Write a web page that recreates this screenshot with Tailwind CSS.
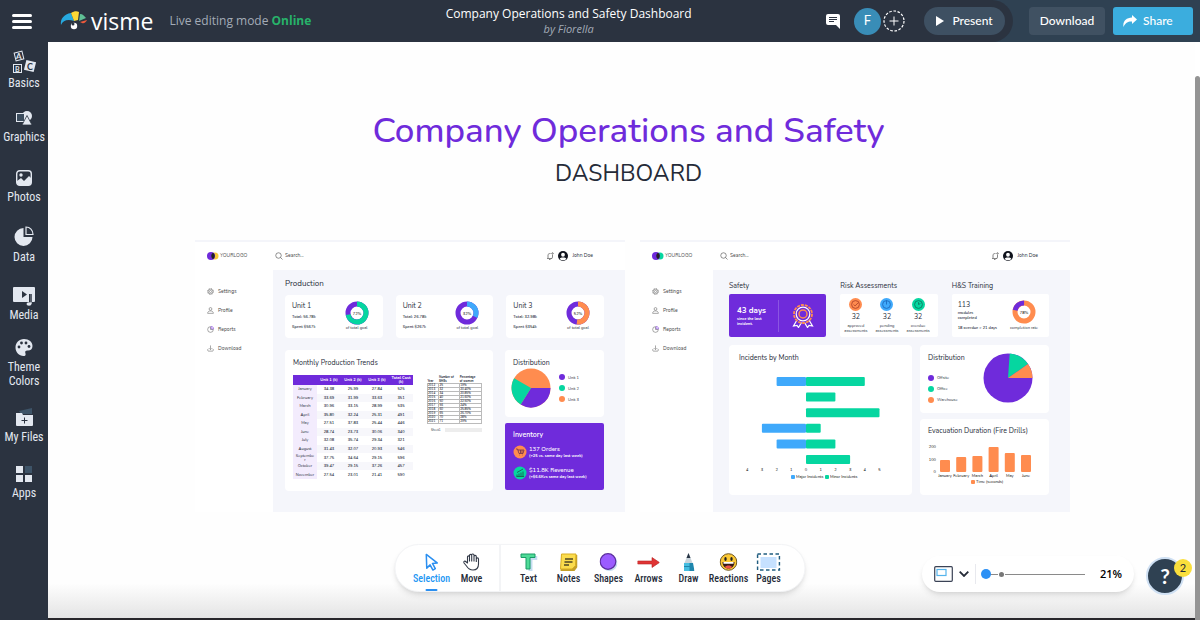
<!DOCTYPE html>
<html lang="en">
<head>
    <meta charset="UTF-8">
    <meta name="viewport" content="width=device-width, initial-scale=1.0">
    <title>Company Operations and Safety Dashboard</title>
    <script src="https://cdn.jsdelivr.net/npm/@tailwindcss/browser@4"></script>
</head>
<body class="relative h-screen flex flex-col overflow-hidden bg-white font-['Lato',sans-serif] text-[#252b38]">

    <!-- Shared icons -->
    <svg class="hidden">
        <symbol id="gear" viewBox="0 0 16 16"><g fill="none" stroke="#666" stroke-width="1.3"><circle cx="8" cy="8" r="5.5"/><circle cx="8" cy="8" r="2.5"/><circle cx="8" cy="8" r="7" stroke-dasharray="2.7 2.8"/></g></symbol>
        <symbol id="user" viewBox="0 0 16 16"><g fill="none" stroke="#666" stroke-width="1.3"><circle cx="8" cy="4.500" r="3.2"/><path d="M1.500 14.500c0-4 3-5.500 6.500-5.500s6.500 1.500 6.500 5.500z"/></g></symbol>
        <symbol id="report" viewBox="0 0 16 16"><g fill="none" stroke-width="1.3"><path stroke="#666" d="M8 1.500a6.500 6.500 0 1 0 6.500 6.500H8z"/><path stroke="#7a35dc" d="M9.500 1v5.500H15C15 3 13 1 9.500 1z"/></g></symbol>
        <symbol id="download" viewBox="0 0 16 16"><path fill="none" stroke="#666" stroke-width="1.3" d="M8 1v9M5 7.500l3 3 3-3M3 8.500c-2 1-2 5.500.500 5.500h9c2.500 0 2.500-4.500.500-5.500"/></symbol>
        <symbol id="search" viewBox="0 0 16 16"><g fill="none" stroke="#555" stroke-width="1.300"><circle cx="7" cy="7" r="5.500"/><path d="M11 11l4 4"/></g></symbol>
        <symbol id="bell" viewBox="0 0 16 16"><g fill="none" stroke="#444" stroke-width="1.300"><path d="M2 13h10l1-3V6M4 12V6c0-2 2-3 5-3"/><circle cx="13" cy="3" r="1.500"/><path d="M6 15h3"/></g></symbol>
        <symbol id="avatar" viewBox="0 0 20 20"><circle cx="10" cy="10" r="10" fill="#10131c"/><circle cx="10" cy="7.500" r="3.800" fill="#fff"/><path fill="#fff" d="M3.500 15.500c1-3.500 12-3.500 13 0-3 4-10 4-13 0z"/></symbol>
    </svg>

    <header class="flex h-[42px] shrink-0 bg-[#2f4152] text-white">
        <div class="flex flex-1 items-center rounded-r-full bg-[#2b3340] pl-3">
            <button aria-label="Menu" class="flex w-5 flex-col gap-[3px]">
                <span class="h-[3px] rounded-full bg-white"></span>
                <span class="h-[3px] rounded-full bg-white"></span>
                <span class="h-[3px] rounded-full bg-white"></span>
            </button>
            <a href="#" class="ml-7 flex items-center gap-1 font-['Open_Sans',sans-serif] text-[23px] leading-6">
                <svg class="h-5 w-[27px]" viewBox="0 0 27 20">
                    <path fill="#27a9e0" d="M1 14C0 8 4 3 11 2l3 8C8 8 3 9 1 14z"/>
                    <path fill="#fbd936" d="M11 2c3-2 6-2 8-1l-1 8-4 1z"/>
                    <path fill="#5fbf95" d="M20 3c3 0 4 2 6 4l-7 3z"/>
                    <path fill="#ee5a3b" d="M20 11l7-2c-1 2-3 4-5 3z"/>
                    <circle cx="14" cy="15" r="3.200" fill="#fff"/><circle cx="13" cy="13" r="1.500" fill="#2b3340"/>
                </svg>
                visme
            </a>
            <p class="ml-4 font-['Open_Sans',sans-serif] text-[12px] text-[#a3abb7]">Live editing mode <b class="text-[#27b26a]">Online</b></p>
            <div class="flex-1 text-center font-['Open_Sans',sans-serif]">
                <h1 class="text-[12px] leading-4">Company Operations and Safety Dashboard</h1>
                <p class="text-[11px] leading-[14px] text-[#a3abb7] italic">by Fiorella</p>
            </div>
            <button aria-label="Comments" class="mr-3.5">
                <svg class="h-4 w-[14px]" viewBox="0 0 14 16"><path fill="#fff" d="M2 1h10a2 2 0 0 1 2 2v13l-4-4H2a2 2 0 0 1-2-2V3a2 2 0 0 1 2-2z"/><path stroke="#2b3340" d="M3 4.500h8M3 6.500h8M3 8.500h5"/></svg>
            </button>
            <span class="flex size-[27px] items-center justify-center rounded-full bg-[#398db7] text-[13px]">F</span>
            <button aria-label="Add collaborator" class="ml-0.5 mr-[19px]">
                <svg class="size-[22px]" viewBox="0 0 22 22" fill="none" stroke="#fff"><circle cx="11" cy="11" r="10" stroke-width="1.200" stroke-dasharray="2.600 1.600"/><path d="M11 6.500v9M6.500 11h9"/></svg>
            </button>
            <button class="mr-2 flex h-7 w-[81px] items-center justify-center gap-2 rounded-full bg-[#3e5062] text-[12px] font-medium">
                <svg class="h-2.5 w-2" viewBox="0 0 8 10"><path fill="#fff" d="M0 0l8 5-8 5z"/></svg>Present
            </button>
        </div>
        <div class="flex items-center gap-2 pl-4 pr-[7px] text-[12px] font-medium">
            <button class="h-7 w-[76px] rounded-sm bg-[#405162]">Download</button>
            <button class="flex h-7 w-20 items-center gap-1.5 rounded-[3px] bg-[#3badde] pl-2.5">
                <svg class="h-3 w-3.5" viewBox="0 0 14 12"><path fill="#fff" d="M9 0l5 4.500L9 9V6.500C5 6.300 2.500 7.500.500 12-.500 6.500 3 2.800 9 2.500z"/></svg>Share
            </button>
        </div>
    </header>

    <div class="flex min-h-0 flex-1">
        <nav class="flex w-12 shrink-0 flex-col bg-[#2b3340] font-['Liberation_Sans_Narrow','Roboto_Condensed','Open_Sans_Condensed',sans-serif] text-[12px] leading-[14px] text-[#e3e8f0]">
            <a href="#" class="flex h-12 flex-col items-center justify-end gap-0.5">
                <svg class="size-6" viewBox="0 0 24 24" font-family="Lato" font-weight="bold"><g fill="none" stroke="#e3e8f0"><rect x="3" y="2" width="8" height="8" transform="rotate(-14 7 6)"/><rect x="1.500" y="14.500" width="8" height="8"/></g><rect x="13" y="11" width="10" height="10" transform="rotate(14 18 16)" fill="#e3e8f0"/><text x="4" y="9" font-size="8" fill="#e3e8f0">A</text><text x="3" y="21.500" font-size="7" fill="#e3e8f0">B</text><text x="15" y="19.500" font-size="9" fill="#2b3340">C</text></svg>
                Basics
            </a>
            <a href="#" class="flex h-[54px] flex-col items-center justify-end gap-1">
                <svg class="h-[15px] w-4" viewBox="0 0 16 15"><circle cx="11" cy="5" r="5" fill="#e3e8f0"/><rect x=".500" y="2.500" width="8" height="8" fill="#3b4c5d" stroke="#e3e8f0"/><path fill="#e3e8f0" stroke="#2b3340" stroke-width=".800" d="M11 4.500l5 9.500H6z"/></svg>
                Graphics
            </a>
            <a href="#" class="flex h-[60px] flex-col items-center justify-end gap-1">
                <svg class="size-4" viewBox="0 0 16 16"><rect x=".700" y=".700" width="14.600" height="14.600" rx="3" fill="none" stroke="#e3e8f0" stroke-width="1.400"/><circle cx="5" cy="5" r="1.700" fill="#e3e8f0"/><path fill="#e3e8f0" d="M1 11l4-3 3 3 5-5 2 2v5a2 2 0 0 1-2 2H3a2 2 0 0 1-2-2z"/></svg>
                Photos
            </a>
            <a href="#" class="flex h-[60px] flex-col items-center justify-end gap-1">
                <svg class="size-5" viewBox="0 0 20 20"><path fill="#e3e8f0" d="M9.500 2a9 9 0 1 0 9 9h-9z"/><path fill="none" stroke="#e3e8f0" stroke-width="1.200" d="M12 1v7.500h7C19 4 16 1 12 1z"/></svg>
                Data
            </a>
            <a href="#" class="flex h-[58px] flex-col items-center justify-end gap-0.5">
                <svg class="h-[19px] w-[22px]" viewBox="0 0 22 19"><rect width="22" height="15" rx="1" fill="#e3e8f0"/><path fill="#2b3340" d="M9 4l5 3.500L9 11z"/><path stroke="#2b3340" stroke-width="1" d="M16.500 7v8"/><path stroke="#2b3340" stroke-width="1.500" d="M18 7v8"/><path stroke="#e3e8f0" stroke-width="1.200" d="M18 15v2"/><ellipse cx="16" cy="17" rx="2.500" ry="1.800" fill="#e3e8f0"/></svg>
                Media
            </a>
            <a href="#" class="flex h-[66px] flex-col items-center justify-end gap-1 text-center">
                <svg class="h-[17px] w-[18px]" viewBox="0 0 18 17"><path fill="#e3e8f0" d="M9 0c5 0 8.500 3 8.500 7 0 3-2 4.500-4.500 4.500-3 0-3 1-2.500 3 .500 2-.500 2.500-2 2.500C4 17 .500 13 .500 8.500S4 0 9 0z"/><g fill="#2b3340"><circle cx="4" cy="8" r="1.400"/><circle cx="6.500" cy="4" r="1.400"/><circle cx="11" cy="4" r="1.400"/><circle cx="14" cy="7.500" r="1.400"/></g></svg>
                <span>Theme<br>Colors</span>
            </a>
            <a href="#" class="flex h-[56px] flex-col items-center justify-end gap-1">
                <svg class="h-[18px] w-[18px]" viewBox="0 0 18 18"><path fill="#3e5468" d="M4 3l13-3v6H6z"/><path fill="#e3e8f0" d="M1 5h6l1 2h10v10a1 1 0 0 1-1 1H2a1 1 0 0 1-1-1z"/><path stroke="#2b3340" d="M9.500 9.500v6M6.500 12.500h6"/></svg>
                My Files
            </a>
            <a href="#" class="flex h-[56px] flex-col items-center justify-end gap-1">
                <svg class="size-4" viewBox="0 0 16 16" fill="#e3e8f0"><rect width="7" height="7"/><rect x="9" width="7" height="7" fill="#3e5468"/><rect y="9" width="7" height="7"/><rect x="9" y="9" width="7" height="7"/></svg>
                Apps
            </a>
        </nav>

        <main class="flex-1 overflow-hidden border-b-2 border-[#28272b] bg-linear-to-b from-[#fefefe] from-94% to-[#e4e4e4] pl-[22px]">
            <div class="mx-auto w-[875px]">
                <div class="pr-2 pt-16 text-center font-['Nunito','Lato',sans-serif]">
                    <h2 class="text-[35px] leading-[50px] font-medium text-[#6f2bdb]">Company Operations and Safety</h2>
                    <p class="text-[23px] leading-9">DASHBOARD</p>
                </div>

                <div class="mt-12 flex gap-[15px] font-['Nunito','Lato',sans-serif]">

                    <!-- Production slide -->
                    <section class="flex h-[272px] w-[430px] flex-col border-t-2 border-[#f4f5fa] bg-white">
                        <div class="flex h-7 items-center pl-3 pr-8 text-[5px]">
                            <svg class="h-2 w-3" viewBox="0 0 12 8"><circle cx="8" cy="4" r="3.500" fill="#f7c93b"/><circle cx="4" cy="4" r="4" fill="#6f2bdb"/><path fill="#222" d="M6 .800a3.800 3.800 0 0 1 0 6.400 3.800 3.800 0 0 1 0-6.400z"/></svg>
                            <span class="ml-px w-[55px] text-[#555]">YOURLOGO</span>
                            <svg class="size-2"><use href="#search"/></svg>
                            <input type="text" aria-label="Search" placeholder="Search..." class="ml-0.5 w-20 placeholder:text-[#444]">
                            <svg class="ml-auto size-2"><use href="#bell"/></svg>
                            <svg class="ml-1 size-[10px]"><use href="#avatar"/></svg>
                            <span class="ml-1">John Doe</span>
                        </div>
                        <div class="flex flex-1">
                            <nav class="flex w-[78px] flex-col gap-3 pl-3 pt-[18px] text-[5px] leading-[7px] text-[#444]">
                                <a href="#" class="flex items-center gap-1"><svg class="size-[7px]"><use href="#gear"/></svg>Settings</a>
                                <a href="#" class="flex items-center gap-1"><svg class="size-[7px]"><use href="#user"/></svg>Profile</a>
                                <a href="#" class="flex items-center gap-1"><svg class="size-[7px]"><use href="#report"/></svg>Reports</a>
                                <a href="#" class="flex items-center gap-1"><svg class="size-[7px]"><use href="#download"/></svg>Download</a>
                            </nav>
                            <div class="flex-1 bg-[#f5f6fb] pl-3 pr-[21px] pt-2">
                                <h3 class="text-[8px] leading-3">Production</h3>
                                <div id="units" class="mt-[5px] grid grid-cols-3 gap-[13px]"></div>
                                <div class="mt-3 grid grid-cols-[208px_1fr] gap-3">
                                    <div class="h-[141px] rounded-sm bg-white pl-2 pt-2">
                                        <h4 class="text-[7px] leading-[10px]">Monthly Production Trends</h4>
                                        <div class="mt-[7px] flex items-start gap-3.5">
                                            <table class="h-[104px] w-[120px] table-fixed text-center text-[4px] leading-[4px] font-semibold [&_td]:p-0 [&_th]:p-0">
                                                <thead class="bg-[#6f2bdb] text-white">
                                                    <tr class="h-[10px]"><th class="w-6"></th><th>Unit 1 (k)</th><th>Unit 2 (k)</th><th>Unit 3 (k)</th><th>Total Cost (k)</th></tr>
                                                </thead>
                                                <tbody id="trends"></tbody>
                                            </table>
                                            <div class="w-[55px]">
                                                <table class="w-full text-left text-[3px] leading-[4px] font-semibold">
                                                    <thead><tr class="align-bottom"><th>Year</th><th>Number of<br>SMEs</th><th>Percentage<br>of women</th></tr></thead>
                                                    <tbody id="women"></tbody>
                                                </table>
                                                <div class="mt-1 flex h-1 items-center bg-[#ededed] text-[3px] leading-[4px]"><span class="bg-white px-1">Sheet1</span></div>
                                            </div>
                                        </div>
                                    </div>
                                    <div class="flex flex-col gap-1.5">
                                        <div class="h-[67px] rounded-sm bg-white pl-2 pt-2">
                                            <h4 class="text-[7px] leading-[10px]">Distribution</h4>
                                            <div class="flex items-center gap-2">
                                                <svg class="-ml-0.5 size-10" viewBox="-20 -20 40 40"><circle r="19.500" fill="#ff8c4f"/><path fill="#6f2bdb" d="M0 0H19.500A19.500 19.500 0 0 1-10.300 16.500z"/><path fill="#06d6a0" d="M0 0L-10.300 16.500A19.500 19.500 0 0 1-16.900-9.700z"/></svg>
                                                <ul class="flex flex-col gap-1 text-[4px] leading-[7px]">
                                                    <li class="flex items-center gap-[3px]"><span class="size-1.5 rounded-full bg-[#6f2bdb]"></span>Unit 1</li>
                                                    <li class="flex items-center gap-[3px]"><span class="size-1.5 rounded-full bg-[#06d6a0]"></span>Unit 2</li>
                                                    <li class="flex items-center gap-[3px]"><span class="size-1.5 rounded-full bg-[#ff8c4f]"></span>Unit 3</li>
                                                </ul>
                                            </div>
                                        </div>
                                        <div class="h-[67px] rounded-xs bg-[#6f2bdb] pl-2 pt-[7px] text-white">
                                            <h4 class="text-[7px] leading-[10px] font-semibold">Inventory</h4>
                                            <div class="mt-[5px] flex items-center gap-0.5">
                                                <svg class="size-[14px]" viewBox="0 0 14 14"><circle cx="7" cy="7" r="6.500" fill="#ff8c4f"/><path fill="none" stroke="#6b3050" stroke-width=".800" d="M3 4h1.500l1.500 4.500h4L11 5H5M6.500 10h.500M9.500 10h.500M7.500 5v3M9 5v3"/></svg>
                                                <p class="text-[4px] leading-[6px] font-bold"><span class="text-[6px] font-medium">137 Orders</span><br>(+25 vs. same day last week)</p>
                                            </div>
                                            <div class="mt-[7px] flex items-center gap-0.5">
                                                <svg class="size-[14px]" viewBox="0 0 14 14"><circle cx="7" cy="7" r="6.500" fill="#06d6a0"/><path fill="none" stroke="#17654f" stroke-width=".900" d="M4 10.500v-2M6 10.500v-3M8 10.500v-4M10 10.500v-5M4 6.500l6-3.500M3.500 10.500h7.500"/></svg>
                                                <p class="text-[4px] leading-[6px] font-bold"><span class="text-[6px] font-medium">$11.8K Revenue</span><br>(+$6.6Kvs same day last week)</p>
                                            </div>
                                        </div>
                                    </div>
                                </div>
                            </div>
                        </div>
                    </section>

                    <!-- Safety slide -->
                    <section class="flex h-[272px] w-[430px] flex-col border-t-2 border-[#f4f5fa] bg-white">
                        <div class="flex h-7 items-center pl-3 pr-8 text-[5px]">
                            <svg class="h-2 w-3" viewBox="0 0 12 8"><circle cx="8" cy="4" r="3.500" fill="#06d6a0"/><circle cx="4" cy="4" r="4" fill="#6f2bdb"/><path fill="#222" d="M6 .800a3.800 3.800 0 0 1 0 6.400 3.800 3.800 0 0 1 0-6.400z"/></svg>
                            <span class="ml-px w-[55px] text-[#555]">YOURLOGO</span>
                            <svg class="size-2"><use href="#search"/></svg>
                            <input type="text" aria-label="Search" placeholder="Search..." class="ml-0.5 w-20 placeholder:text-[#444]">
                            <svg class="ml-auto size-2"><use href="#bell"/></svg>
                            <svg class="ml-1 size-[10px]"><use href="#avatar"/></svg>
                            <span class="ml-1">John Doe</span>
                        </div>
                        <div class="flex flex-1">
                            <nav class="flex w-[73px] flex-col gap-3 pl-3 pt-[18px] text-[5px] leading-[7px] text-[#444]">
                                <a href="#" class="flex items-center gap-1"><svg class="size-[7px]"><use href="#gear"/></svg>Settings</a>
                                <a href="#" class="flex items-center gap-1"><svg class="size-[7px]"><use href="#user"/></svg>Profile</a>
                                <a href="#" class="flex items-center gap-1"><svg class="size-[7px]"><use href="#report"/></svg>Reports</a>
                                <a href="#" class="flex items-center gap-1"><svg class="size-[7px]"><use href="#download"/></svg>Download</a>
                            </nav>
                            <div class="flex-1 bg-[#f5f6fb] pl-4 pr-[21px] pt-[11px]">
                                <div class="grid grid-cols-3 gap-x-[14px] gap-y-[3px] text-[7px] leading-[10px]">
                                    <h3>Safety</h3>
                                    <h3>Risk Assessments</h3>
                                    <h3>H&amp;S Training</h3>
                                    <div class="flex h-[43px] items-center rounded-xs bg-[#6f2bdb] pl-2 text-white">
                                        <p class="w-[41px] text-[4px] leading-[5px] font-bold"><span class="text-[8px] leading-[10px]">43 days</span><br>since the last<br>incident.</p>
                                        <span class="h-8 w-px bg-white/20"></span>
                                        <svg class="mx-auto size-6" viewBox="0 0 24 24" fill="none"><path stroke="#fff" stroke-width="1.200" d="M6 16l-3.500 6 3.500-.500 1.500 2 3-5M18 16l3.500 6-3.500-.500-1.500 2-3-5"/><circle cx="12" cy="10" r="9" stroke="#ff8c4f" stroke-width="1.800" stroke-dasharray="3 1"/><circle cx="12" cy="10" r="6.800" stroke="#fff" stroke-width="1.200"/><circle cx="12" cy="10" r="4" stroke="#ff8c4f" stroke-width="1.500"/></svg>
                                    </div>
                                    <div class="grid h-[43px] grid-cols-3 rounded-xs bg-white pt-1 pr-1 text-center text-[4px] leading-[5px]">
                                        <div><svg class="mx-auto size-[13px]" viewBox="0 0 14 14"><circle cx="7" cy="7" r="7" fill="#ff8c4f"/><g fill="none" stroke="#b3452b"><circle cx="7" cy="7" r="4.200"/><path d="M5 7l1.500 1.500L10 5"/></g></svg><p class="text-[7px] leading-[12px]">32</p><p>approved assessments</p></div>
                                        <div><svg class="mx-auto size-[13px]" viewBox="0 0 14 14"><circle cx="7" cy="7" r="7" fill="#3fa9fb"/><g fill="none" stroke="#1d6dc0"><circle cx="7" cy="7" r="4.200"/><path d="M7 2.500V7"/></g></svg><p class="text-[7px] leading-[12px]">32</p><p>pending assessments</p></div>
                                        <div><svg class="mx-auto size-[13px]" viewBox="0 0 14 14"><circle cx="7" cy="7" r="7" fill="#06d6a0"/><g fill="none" stroke="#0b7d62"><circle cx="7" cy="7" r="4.200"/><path d="M7 4.500V7l2-1"/></g></svg><p class="text-[7px] leading-[12px]">32</p><p>overdue assessments</p></div>
                                    </div>
                                    <div class="flex h-[43px] justify-between rounded-xs bg-white pl-1.5 pr-1.5 pt-1.5 text-[4px] leading-[5px]">
                                        <div class="font-semibold"><p class="text-[7px] leading-[10px] font-normal">113</p><p>modules<br>completed</p><p class="mt-[5px]">18 overdue &gt; 21 days</p></div>
                                        <div class="w-[38px] text-center"><svg class="mx-auto size-6" viewBox="0 0 24 24"><circle cx="12" cy="12" r="9" fill="none" stroke="#ff8c4f" stroke-width="5"/><circle cx="12" cy="12" r="9" fill="none" stroke="#6f2bdb" stroke-width="5" pathLength="100" stroke-dasharray="22 78" transform="rotate(-169 12 12)"/><text x="12" y="13.500" text-anchor="middle" font-size="4">78%</text></svg><p class="mt-px whitespace-nowrap">completion rate</p></div>
                                    </div>
                                </div>
                                <div class="mt-2 grid grid-cols-[183px_1fr] gap-2">
                                    <div class="h-[150px] rounded-sm bg-white pl-2.5 pt-2">
                                        <h4 class="text-[7px] leading-[10px]">Incidents by Month</h4>
                                        <svg class="mt-3 h-[108px] w-[150px]" viewBox="0 0 150 108" font-size="4">
                                            <g id="incidents"></g>
                                            <rect x="52" y="100" width="4" height="4" rx="1" fill="#3fa9fb"/><text x="57" y="103">Major Incidents</text>
                                            <rect x="86" y="100" width="4" height="4" rx="1" fill="#06d6a0"/><text x="91" y="103">Minor Incidents</text>
                                        </svg>
                                    </div>
                                    <div class="flex flex-col gap-1.5">
                                        <div class="flex h-[68px] justify-between rounded-sm bg-white pl-2 pr-4 pt-2">
                                            <div>
                                                <h4 class="text-[7px] leading-[10px]">Distribution</h4>
                                                <ul class="mt-[11px] flex flex-col gap-1 text-[4px] leading-[7px]">
                                                    <li class="flex items-center gap-[3px]"><span class="size-1.5 rounded-full bg-[#6f2bdb]"></span>Offsite</li>
                                                    <li class="flex items-center gap-[3px]"><span class="size-1.5 rounded-full bg-[#06d6a0]"></span>Office</li>
                                                    <li class="flex items-center gap-[3px]"><span class="size-1.5 rounded-full bg-[#ff8c4f]"></span>Warehouse</li>
                                                </ul>
                                            </div>
                                            <svg class="size-[50px]" viewBox="-25 -25 50 50"><circle r="24.500" fill="#6f2bdb"/><path fill="#06d6a0" d="M0 0L1.700-24.400A24.500 24.500 0 0 1 20-14z"/><path fill="#ff8c4f" d="M0 0L20-14A24.500 24.500 0 0 1 24.500 0z"/></svg>
                                        </div>
                                        <div class="h-[76px] rounded-sm bg-white pl-2 pt-[7px]">
                                            <h4 class="text-[7px] leading-[10px]">Evacuation Duration (Fire Drills)</h4>
                                            <svg class="mt-1.5 h-[48px] w-[110px]" viewBox="0 0 110 48" font-size="4">
                                                <text x="8" y="6" text-anchor="end">200</text><text x="8" y="19" text-anchor="end">100</text><text x="8" y="31" text-anchor="end">0</text>
                                                <g id="drills" text-anchor="middle"></g>
                                                <rect x="43" y="38" width="4" height="4" rx="1" fill="#ff8c4f"/><text x="48" y="41">Time (seconds)</text>
                                            </svg>
                                        </div>
                                    </div>
                                </div>
                            </div>
                        </div>
                    </section>
                </div>
            </div>
        </main>
        <!-- Scrollbar -->
        <div class="w-[5px] bg-white pt-[34px]"><div class="h-full rounded-t-full bg-[#949494]"></div></div>
    </div>

    <!-- Tool bar -->
    <div class="absolute bottom-7 left-1/2 flex h-12 -translate-x-1/2 rounded-full border border-gray-100 bg-white px-4 font-['Liberation_Sans_Narrow','Roboto_Condensed','Open_Sans_Condensed',sans-serif] text-[10px] leading-3 font-medium shadow-md">
        <button class="flex w-10 flex-col items-center gap-0.5 pt-2 text-[#2196f3]">
            <svg class="size-[18px]" viewBox="0 0 19 19"><path fill="#fff" stroke="#2b8ff0" stroke-width="1.600" stroke-linejoin="round" d="M4 1.500l11.500 9-5 .500 3 5.500-2.500 1.500-3-5.500-3.500 3.500z"/></svg>
            Selection
            <span class="mt-0.5 h-0.5 w-3 shrink-0 rounded-full bg-[#2b8ff0]"></span>
        </button>
        <button class="flex w-10 flex-col items-center gap-0.5 pt-2">
            <svg class="size-[18px]" viewBox="0 0 18 18"><path fill="#fff" stroke="#333a48" stroke-width="1.100" stroke-linejoin="round" d="M5 10V4c0-1.500 2-1.500 2 0V2.500c0-1.500 2.200-1.500 2.200 0V2c0-1.500 2.300-1.300 2.300 0v1.500c0-1.500 2.300-1.500 2.300 0V6c0-1.500 2.200-1.500 2.200 0v5c0 4-2.500 6-5.500 6-3.500 0-5-1.500-6.500-4L1.500 10c-.800-1.500 1-2.500 2-1.200zM7 4v4.500M9.200 3v5.500M11.500 3.500v5M13.800 5v4"/></svg>
            Move
        </button>
        <span class="mx-2 w-px bg-[#e8e9ee]"></span>
        <button class="flex w-10 flex-col items-center gap-0.5 pt-2">
            <svg class="size-[18px]" viewBox="0 0 18 18"><path fill="#c5dcf0" d="M3 3h15v4h-5v11H9V7z"/><path fill="#4fdb97" stroke="#189b67" d="M1.500 1h14v3.500H10.500V16h-4V4.500h-5z"/></svg>
            Text
        </button>
        <button class="flex w-10 flex-col items-center gap-0.5 pt-2">
            <svg class="size-[18px]" viewBox="0 0 18 18"><path fill="#c4a028" d="M2 2h16v12l-3 4H1z"/><path fill="#fbdc4d" stroke="#d8ad22" d="M2 1h14.500l-.500 11.500-3.500 3.500H1z"/><path stroke="#4e4525" stroke-width="1.300" d="M5.500 6h8M5 9h8M4.500 12h5"/></svg>
            Notes
        </button>
        <button class="flex w-10 flex-col items-center gap-0.5 pt-2">
            <svg class="size-[18px]" viewBox="0 0 18 18"><circle cx="10" cy="10" r="8" fill="#c5dcf0"/><circle cx="8.500" cy="8.500" r="7.800" fill="#9b5cff" stroke="#5b2d9e" stroke-width="1.200"/></svg>
            Shapes
        </button>
        <button class="flex w-10 flex-col items-center gap-0.5 pt-2">
            <svg class="h-[18px] w-[22px]" viewBox="0 0 22 18"><path fill="#e03434" stroke="#b52222" stroke-width=".600" d="M0 8h14.500V4.500L22 9.500l-7.500 5V11H0z"/></svg>
            Arrows
        </button>
        <button class="flex w-10 flex-col items-center gap-0.5 pt-2">
            <svg class="h-[18px] w-3" viewBox="0 0 12 18"><path fill="#c9d4db" d="M6 0l4.500 11h-9z"/><path fill="#273444" d="M6 0l2 5H4z"/><path fill="#45bde0" d="M1.500 10h9v8h-9z"/><path fill="#1f86ad" d="M7 10h3.500l1.500 8H7zM1.500 13h9v1h-9z"/></svg>
            Draw
        </button>
        <button class="flex w-10 flex-col items-center gap-0.5 pt-2">
            <svg class="size-[18px]" viewBox="0 0 18 18"><circle cx="9" cy="9" r="8.300" fill="#fcc935" stroke="#6f5620"/><ellipse cx="6" cy="6" rx="1.200" ry="2" fill="#222"/><ellipse cx="12" cy="6" rx="1.200" ry="2" fill="#222"/><path fill="#3a1d18" d="M3 9h12c0 4-2.500 6.500-6 6.500S3 13 3 9z"/><path fill="#fff" d="M4 9h10v1.800H4z"/><path fill="#ee4f48" d="M5.500 14c1-2 6-2 7 0-2 2-5 2-7 0z"/></svg>
            Reactions
        </button>
        <button class="flex w-10 flex-col items-center gap-0.5 pt-2">
            <svg class="h-[18px] w-6" viewBox="0 0 24 18"><rect x="4" y="4" width="16" height="11" fill="#c6e1ff"/><rect x="1" y="1" width="22" height="16" fill="none" stroke="#215d80" stroke-width="1.600" stroke-dasharray="3.500 2.500"/></svg>
            Pages
        </button>
    </div>

    <!-- Zoom control -->
    <div class="absolute bottom-7 right-[66px] flex h-9 w-[212px] items-center rounded-full bg-white pl-3 pr-3 shadow-md">
        <button aria-label="Fit to screen" class="flex items-center gap-1.5">
            <svg class="h-4 w-[19px]" viewBox="0 0 19 16" fill="none"><rect x=".700" y=".700" width="17.600" height="14.600" rx="1" stroke="#3b4356" stroke-width="1.200"/><rect x="3" y="3.500" width="9" height="6" stroke="#55b4ec" stroke-width="1.200"/></svg>
            <svg class="h-1.5 w-[10px]" viewBox="0 0 10 6"><path fill="none" stroke="#252b38" stroke-width="1.800" d="M.700.700L5 5 9.300.700"/></svg>
        </button>
        <span class="ml-1.5 h-5 w-px bg-[#e8e9ee]"></span>
        <div class="relative ml-[5px] flex h-5 w-[104px] items-center">
            <span class="absolute right-0 left-1 h-px bg-[#8a8a8a]"></span>
            <span class="absolute left-[18px] size-[5px] rounded-full bg-[#777] ring-1 ring-white"></span>
            <input type="range" aria-label="Zoom" min="0" max="100" value="0" class="relative h-2.5 w-full appearance-none bg-transparent [&::-webkit-slider-thumb]:size-2.5 [&::-webkit-slider-thumb]:appearance-none [&::-webkit-slider-thumb]:rounded-full [&::-webkit-slider-thumb]:bg-[#2b90f5]">
        </div>
        <span class="ml-auto font-['Open_Sans',sans-serif] text-[11px] font-semibold text-black">21%</span>
    </div>

    <div class="absolute right-4 bottom-[25px]">
        <button aria-label="Help" class="flex size-[38px] items-center justify-center rounded-full border-2 border-[#cfe0f3] bg-[#2f4152] text-[21px] font-bold text-white">?</button>
        <span class="absolute -right-2 top-0.5 flex size-[18px] items-center justify-center rounded-full bg-[#fadf3c] text-[11px]">2</span>
    </div>

    <script>
        // Unit cards: name, total, spent, share in percent, ring colour
        const units = [
            ['Unit 1', '56.78k', '$567k', 72, '#06d6a0'],
            ['Unit 2', '26.78k', '$267k', 32, '#3fa9fb'],
            ['Unit 3', '32.98k', '$354k', 52, '#ff8c4f']
        ];
        document.getElementById('units').innerHTML = units.map(([name, total, spent, pct, color]) => `
            <div class="flex h-[43px] justify-between rounded-sm bg-white pl-[7px] pr-3.5 pt-1.5 text-[4px] leading-[10px] font-semibold">
                <div>
                    <h4 class="text-[7px] font-normal">${name}</h4>
                    <p class="mt-px">Total: ${total}</p>
                    <p>Spent ${spent}</p>
                </div>
                <div class="text-center font-normal">
                    <svg class="mx-auto size-6" viewBox="0 0 24 24">
                        <circle cx="12" cy="12" r="9" fill="none" stroke="#6f2bdb" stroke-width="5"/>
                        <circle cx="12" cy="12" r="9" fill="none" stroke="${color}" stroke-width="5" pathLength="100" stroke-dasharray="${pct} ${100 - pct}" transform="rotate(-90 12 12)"/>
                        <text x="12" y="13.500" text-anchor="middle" font-size="4">${pct}%</text>
                    </svg>
                    <p class="-mt-0.5">of total goal</p>
                </div>
            </div>
        `).join('');

        const trends = [
            ['January', '34.38', '25.99', '27.84', '525'],
            ['February', '33.69', '31.99', '33.63', '351'],
            ['March', '30.96', '33.15', '28.99', '535'],
            ['April', '35.80', '32.24', '25.31', '491'],
            ['May', '27.51', '37.83', '25.44', '446'],
            ['June', '28.74', '23.73', '30.06', '340'],
            ['July', '32.08', '35.74', '29.34', '321'],
            ['August', '31.43', '32.07', '20.93', '546'],
            ['Septembe<br>r', '37.75', '34.64', '29.15', '596'],
            ['October', '39.47', '29.15', '37.26', '457'],
            ['November', '27.54', '23.01', '21.41', '590']
        ];
        document.getElementById('trends').innerHTML = trends.map(([month, ...cells]) => `
            <tr class="h-2 even:bg-[#f7f7fb]">
                <th class="bg-[#f3ecfd] font-normal">${month}</th>
                ${cells.map(c => `<td>${c}</td>`).join('')}
            </tr>
        `).join('');

        const women = [
            [2012, 25, '19%'], [2013, 32, '20.40%'], [2014, 34, '20.85%'], [2015, 40, '21.60%'], [2016, 50, '22.50%'],
            [2017, 56, '24%'], [2018, 60, '25.85%'], [2019, 65, '26.70%'], [2020, 70, '28%'], [2021, 71, '29%']
        ];
        document.getElementById('women').innerHTML = women.map(row => `
            <tr>${row.map(c => `<td class="border border-[#bbb] leading-[3px]">${c}</td>`).join('')}</tr>
        `).join('');

        // Diverging bars: [major, minor] per month
        const zero = 67, unit = 14.7;
        const incidents = [[2, 4], [0, 2], [0, 5], [3, 1], [2, 2], [0, 3]];
        document.getElementById('incidents').innerHTML = incidents.map(([major, minor], i) => `
            <rect x="${zero - major * unit}" y="${2 + i * 15.600}" width="${major * unit}" height="9" rx="1" fill="#3fa9fb"/>
            <rect x="${zero}" y="${2 + i * 15.600}" width="${minor * unit}" height="9" rx="1" fill="#06d6a0"/>
        `).join('') + [-4, -3, -2, -1, 0, 1, 2, 3, 4, 5].map(n => `
            <text x="${zero + n * unit}" y="96" text-anchor="middle">${Math.abs(n)}</text>
        `).join('');

        const drills = [['January', 12], ['February', 15], ['March', 16], ['April', 25], ['May', 19], ['June', 17]];
        document.getElementById('drills').innerHTML = drills.map(([month, h], i) => `
            <rect x="${12 + i * 16.200}" y="${30 - h}" width="10" height="${h}" rx="1" fill="#ff8c4f"/>
            <text x="${17 + i * 16.200}" y="35">${month}</text>
        `).join('');
    </script>
</body>
</html>
